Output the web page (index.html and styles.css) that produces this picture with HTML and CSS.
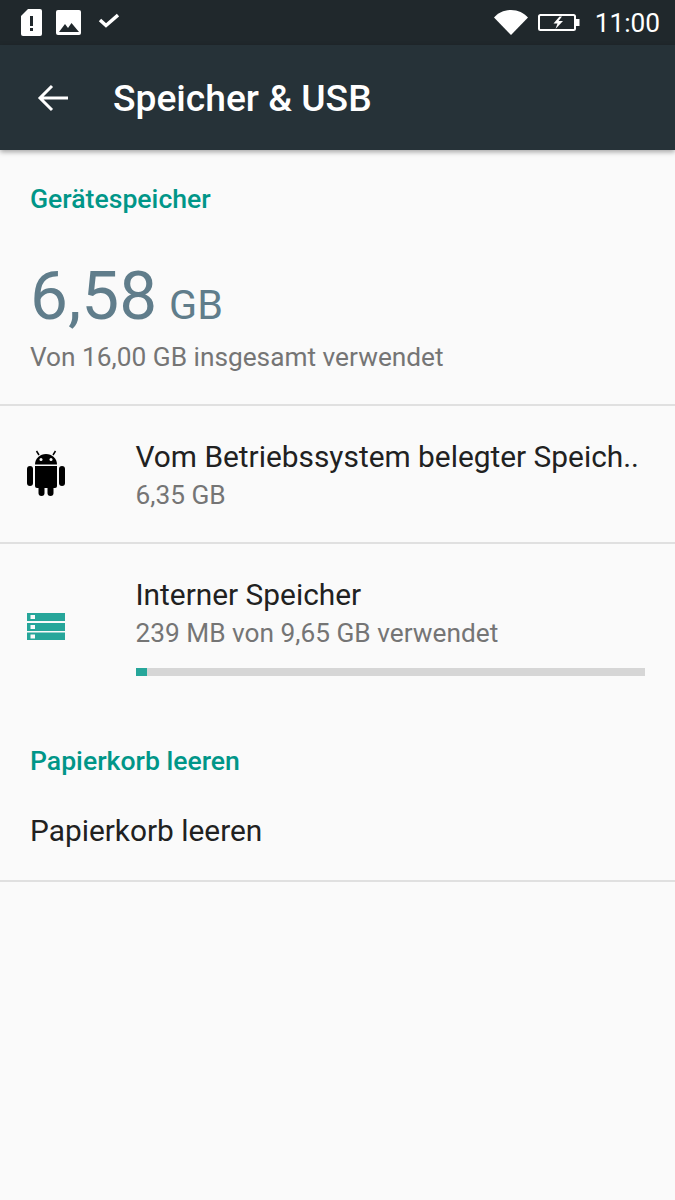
FILE: index.html
```html
<html lang="de">
  <head>
    <meta charset="UTF-8" />
    <meta name="viewport" content="width=device-width, initial-scale=1.0" />
    <title>Speicher &amp; USB</title>
    <link rel="stylesheet" href="styles.css">
  </head>
  <body>
    <div class="status-bar">
      <div class="status-icons">
        <svg class="icon-sim" width="21" height="27" viewBox="0 0 21 27">
          <path d="M7 0H19a2 2 0 0 1 2 2V25a2 2 0 0 1-2 2H2a2 2 0 0 1-2-2V7z" fill="#fff"/>
          <rect x="9" y="7" width="3" height="10" fill="#20282c"/>
          <rect x="9" y="19" width="3" height="3" fill="#20282c"/>
        </svg>
        <svg class="icon-image" width="25" height="25" viewBox="0 0 25 25">
          <rect width="25" height="25" rx="2" fill="#fff"/>
          <path d="M3 22L9 14L12 18L15.500 13L23 22z" fill="#20282c"/>
        </svg>
        <svg class="icon-check" width="21" height="18" viewBox="0 0 21 18">
          <path d="M2 8L8 13.500L20 3" fill="none" stroke="#fff" stroke-width="3.500"/>
        </svg>
      </div>
      <div class="status-right">
        <svg class="icon-wifi" width="34" height="25" viewBox="0 0 34 25">
          <path d="M0 7.500C4 3 10 0 17 0S30 3 34 7.500L17 25z" fill="#fff"/>
        </svg>
        <svg class="icon-battery" width="42" height="17" viewBox="0 0 42 17">
          <rect x="1" y="1" width="36" height="15" rx="1.500" fill="none" stroke="#fff" stroke-width="2"/>
          <rect x="38" y="5" width="3.500" height="7" fill="#fff"/>
          <path d="M21.500 2.500L15.500 9.500H19.500L17.500 15L25 7H20.500L24 2.500z" fill="#fff"/>
        </svg>
        <span class="clock">11:00</span>
      </div>
    </div>

    <div class="app-bar">
      <svg class="back-arrow" width="32" height="30" viewBox="0 0 32 30">
        <path d="M31 15H3M15 3L3 15L15 27" fill="none" stroke="#fff" stroke-width="3"/>
      </svg>
      <h1 class="app-title">Speicher &amp; USB</h1>
    </div>

    <div class="content">
      <div class="section-title first">Gerätespeicher</div>
      <div class="summary">
        <div class="used"><span class="used-number">6,58</span><span class="used-unit">GB</span></div>
        <div class="used-note">Von 16,00 GB insgesamt verwendet</div>
      </div>

      <div class="row row-system">
        <div class="row-icon">
          <svg width="38" height="46" viewBox="0 0 38 46">
            <rect x="0" y="16" width="6" height="20" rx="3" fill="#000"/>
            <rect x="32" y="16" width="6" height="20" rx="3" fill="#000"/>
            <path d="M8 16H30V36a2 2 0 0 1-2 2H10a2 2 0 0 1-2-2z" fill="#000"/>
            <rect x="11.500" y="34" width="6" height="12" rx="3" fill="#000"/>
            <rect x="20.500" y="34" width="6" height="12" rx="3" fill="#000"/>
            <path d="M8 14.500C8 8.500 13 4 19 4S30 8.500 30 14.500z" fill="#000"/>
            <path d="M12 5L9.500 1M26 5L28.500 1" stroke="#000" stroke-width="1.500"/>
            <circle cx="14" cy="9.500" r="1.500" fill="#fafafa"/>
            <circle cx="24" cy="9.500" r="1.500" fill="#fafafa"/>
          </svg>
        </div>
        <div class="row-text">
          <div class="row-title">Vom Betriebssystem belegter Speich..</div>
          <div class="row-sub">6,35 GB</div>
        </div>
      </div>

      <div class="row row-storage">
        <div class="row-icon">
          <svg width="38" height="27" viewBox="0 0 38 27">
            <rect y="0" width="38" height="8" fill="#26a69a"/>
            <rect y="10" width="38" height="8" fill="#26a69a"/>
            <rect y="19.500" width="38" height="7.500" fill="#26a69a"/>
            <rect x="3.500" y="2" width="4.500" height="4" fill="#fafafa"/>
            <rect x="3.500" y="12" width="4.500" height="4" fill="#fafafa"/>
            <rect x="3.500" y="21.500" width="4.500" height="4" fill="#fafafa"/>
          </svg>
        </div>
        <div class="row-text">
          <div class="row-title">Interner Speicher</div>
          <div class="row-sub">239 MB von 9,65 GB verwendet</div>
          <div class="progress"><div class="progress-fill" style="width: 2.2%"></div></div>
        </div>
      </div>

      <div class="section-title second">Papierkorb leeren</div>
      <div class="row-plain">Papierkorb leeren</div>
    </div>
  </body>
</html>
```
FILE: styles.css
```css
/* body styles */
body {
  margin: 0;
  padding: 0;
  background-color: #fafafa;
  font-family: Roboto, sans-serif;
}

/* status bar */
.status-bar {
  height: 45px;
  background-color: #20282c;
  display: flex;
  justify-content: space-between;
  align-items: center;
  padding: 0 15px 0 21px;
  box-sizing: border-box;
}
.status-icons,
.status-right {
  display: flex;
  align-items: center;
}
.icon-image {
  margin-left: 14px;
}
.icon-check {
  margin-left: 17px;
  margin-top: -4px;
}
.icon-battery {
  margin-left: 10px;
  margin-top: -1px;
}
.clock {
  margin-left: 15px;
  color: #fff;
  font-size: 26.250px;
}

/* app bar */
.app-bar {
  height: 105px;
  background-color: #263238;
  display: flex;
  align-items: center;
  padding-left: 37px;
  box-shadow: 0 2px 5px rgba(0, 0, 0, 0.35);
  position: relative;
}
.app-title {
  margin: 0 0 0 44px;
  color: #fff;
  font-size: 37.200px;
  font-weight: 500;
}

/* content */
.section-title {
  color: #009688;
  font-size: 26.600px;
  font-weight: 500;
  line-height: 30px;
  padding-left: 30px;
}
.section-title.first {
  padding-top: 34px;
}
.section-title.second {
  padding-top: 32px;
}
.summary {
  padding: 0 30px 32px;
  border-bottom: 2px solid #e0e0e0;
}
.used {
  margin-top: 42px;
  color: #607d8b;
  line-height: 80px;
  display: flex;
  align-items: baseline;
}
.used-number {
  font-size: 67.500px;
}
.used-unit {
  font-size: 41.250px;
  margin-left: 12px;
}
.used-note {
  color: #757575;
  font-size: 26.250px;
  line-height: 30px;
  margin-top: -3px;
}

/* rows */
.row {
  display: flex;
  align-items: flex-start;
}
.row-system {
  height: 136px;
  border-bottom: 2px solid #e0e0e0;
}
.row-storage {
  height: 170px;
}
.row-icon {
  width: 135.500px;
  padding-left: 27px;
  box-sizing: border-box;
  flex-shrink: 0;
}
.row-system .row-icon {
  padding-top: 44px;
}
.row-storage .row-icon {
  padding-top: 69px;
}
.row-text {
  flex: 1;
  padding-top: 34px;
  padding-right: 30px;
}
.row-title {
  color: #212121;
  font-size: 29.850px;
  line-height: 34px;
  white-space: nowrap;
}
.row-sub {
  color: #757575;
  font-size: 26.250px;
  line-height: 30px;
  margin-top: 6px;
}
.progress {
  height: 8px;
  background-color: #d6d6d6;
  margin-top: 20px;
}
.progress-fill {
  height: 100%;
  background-color: #26a69a;
}
.row-plain {
  color: #212121;
  font-size: 29.850px;
  line-height: 34px;
  padding: 38px 30px 32px;
  border-bottom: 2px solid #e0e0e0;
}
```
